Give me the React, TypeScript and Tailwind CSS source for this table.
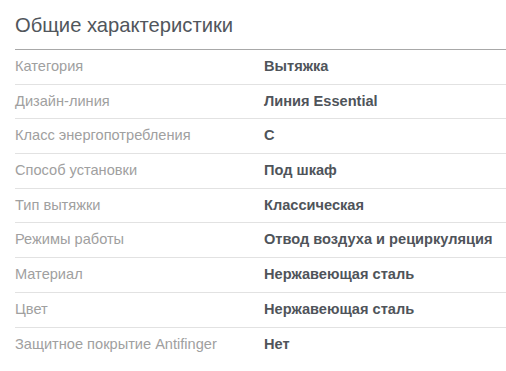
import React from 'react';

const rows: [string, string][] = [
  ['Категория', 'Вытяжка'],
  ['Дизайн-линия', 'Линия Essential'],
  ['Класс энергопотребления', 'C'],
  ['Способ установки', 'Под шкаф'],
  ['Тип вытяжки', 'Классическая'],
  ['Режимы работы', 'Отвод воздуха и рециркуляция'],
  ['Материал', 'Нержавеющая сталь'],
  ['Цвет', 'Нержавеющая сталь'],
  ['Защитное покрытие Antifinger', 'Нет'],
];

const App = () => {
  return (
    <section className="w-[506px] h-[371px] bg-white pl-[15px] pt-[11px] font-['Liberation_Sans',Arial,sans-serif]">
      <h2 className="text-[20.2px] leading-[28px] text-[#51565c] pb-[10px] border-b border-[#a8a8a8]">
        Общие характеристики
      </h2>
      <div>
        {rows.map(([label, value], i) => (
          <div
            key={label}
            className={`flex items-center h-[34.7px] ${i < rows.length - 1 ? 'border-b border-[#e2e2e2]' : ''}`}
          >
            <div className="w-[249px] text-[14.6px] text-[#a0a0a0]">{label}</div>
            <div className="text-[14.6px] font-bold text-[#4f545a]">{value}</div>
          </div>
        ))}
      </div>
    </section>
  );
};

export default App;
